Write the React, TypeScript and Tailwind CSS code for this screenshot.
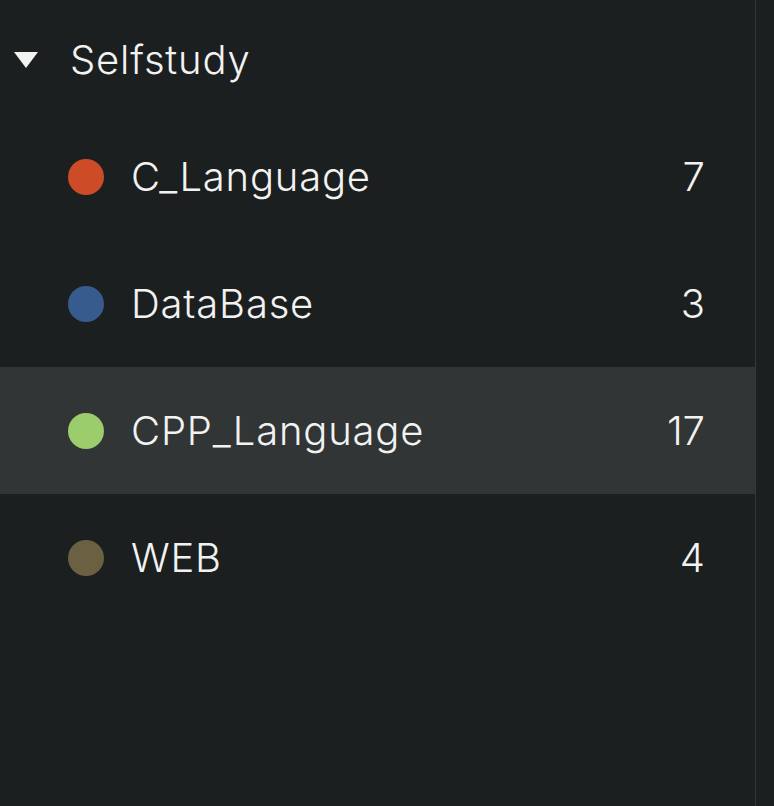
const groups = [
  { name: "C_Language", count: 7, color: "bg-[#cd4b26]", active: false },
  { name: "DataBase", count: 3, color: "bg-[#365b8c]", active: false },
  { name: "CPP_Language", count: 17, color: "bg-[#9ccd6c]", active: true },
  { name: "WEB", count: 4, color: "bg-[#6b6142]", active: false },
];

export default function App() {
  return (
    <div
      className="flex h-[806px] w-[774px] bg-[#1c1f20] text-[#f2f2f2] overflow-hidden"
      style={{ fontFamily: "Inter, 'Noto Sans', sans-serif" }}
    >
      <div className="w-[756px] shrink-0 border-r border-[#34383a]">
        {/* header */}
        <div className="flex h-[113px] items-center pt-[6px]">
          <svg width="26" height="20" viewBox="0 0 26 20" className="ml-[13px]">
            <polygon points="1,2 25,2 13,18" fill="#f2f2f2" />
          </svg>
          <span className="ml-[31px] text-[40px] font-light tracking-[0.02em] leading-none">Selfstudy</span>
        </div>

        {groups.map((g) => (
          <div
            key={g.name}
            className={`flex h-[127px] items-center pl-[68px] pr-[50px] ${g.active ? "bg-[#313536]" : ""}`}
          >
            <span className={`h-[36px] w-[36px] rounded-full ${g.color}`} />
            <span className="ml-[27px] flex-1 text-[40px] font-light tracking-[0.02em] leading-none">{g.name}</span>
            <span className="text-[40px] font-light leading-none">{g.count}</span>
          </div>
        ))}
      </div>
      <div className="flex-1" />
    </div>
  );
}
